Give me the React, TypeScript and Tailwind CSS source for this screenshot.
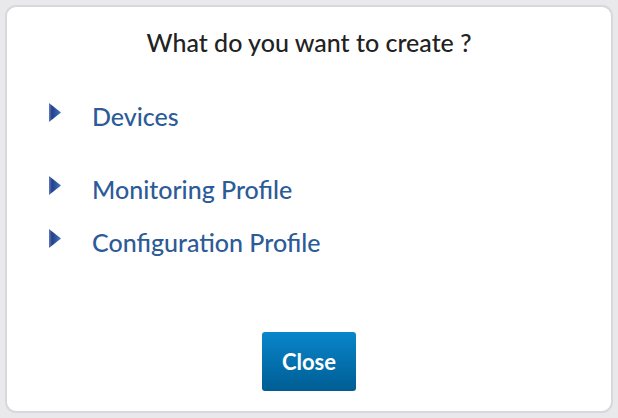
const items = ["Devices", "Monitoring Profile", "Configuration Profile"]

function Arrow() {
  return (
    <svg width="12" height="19" viewBox="0 0 12 19" className="shrink-0 mb-[9px]">
      <defs>
        <linearGradient id="arrowFill" x1="0" y1="0" x2="1" y2="0">
          <stop offset="0" stopColor="#6579bd" />
          <stop offset="0.25" stopColor="#24418a" />
          <stop offset="1" stopColor="#3f78bd" />
        </linearGradient>
      </defs>
      <polygon points="0,0 12,9.5 0,19" fill="url(#arrowFill)" />
    </svg>
  )
}

export default function App() {
  return (
    <div className="w-[618px] h-[418px] bg-[#e9e9eb] p-[5px] font-['Lato',sans-serif]">
      <div className="h-full rounded-[11px] border-2 border-[#d8d8da] bg-white flex flex-col items-center">
        <h1 className="mt-[20px] text-[25px] leading-[30px] font-medium text-[#222222]">What do you want to create ?</h1>

        <ul className="self-stretch pl-[42px]">
          {items.map((item, i) => (
            <li
              key={item}
              className={`flex items-center gap-[31px] h-[30px] ${i === 0 ? "mt-[45px]" : i === 1 ? "mt-[43px]" : "mt-[23px]"}`}
            >
              <Arrow />
              <span className="text-[25px] font-medium text-[#2d5b97]">{item}</span>
            </li>
          ))}
        </ul>

        <button className="mt-auto mb-[20px] w-[94px] h-[59px] rounded-[3px] bg-gradient-to-b from-[#0a86cb] to-[#005d94] text-white text-[22px] font-bold">
          Close
        </button>
      </div>
    </div>
  )
}
